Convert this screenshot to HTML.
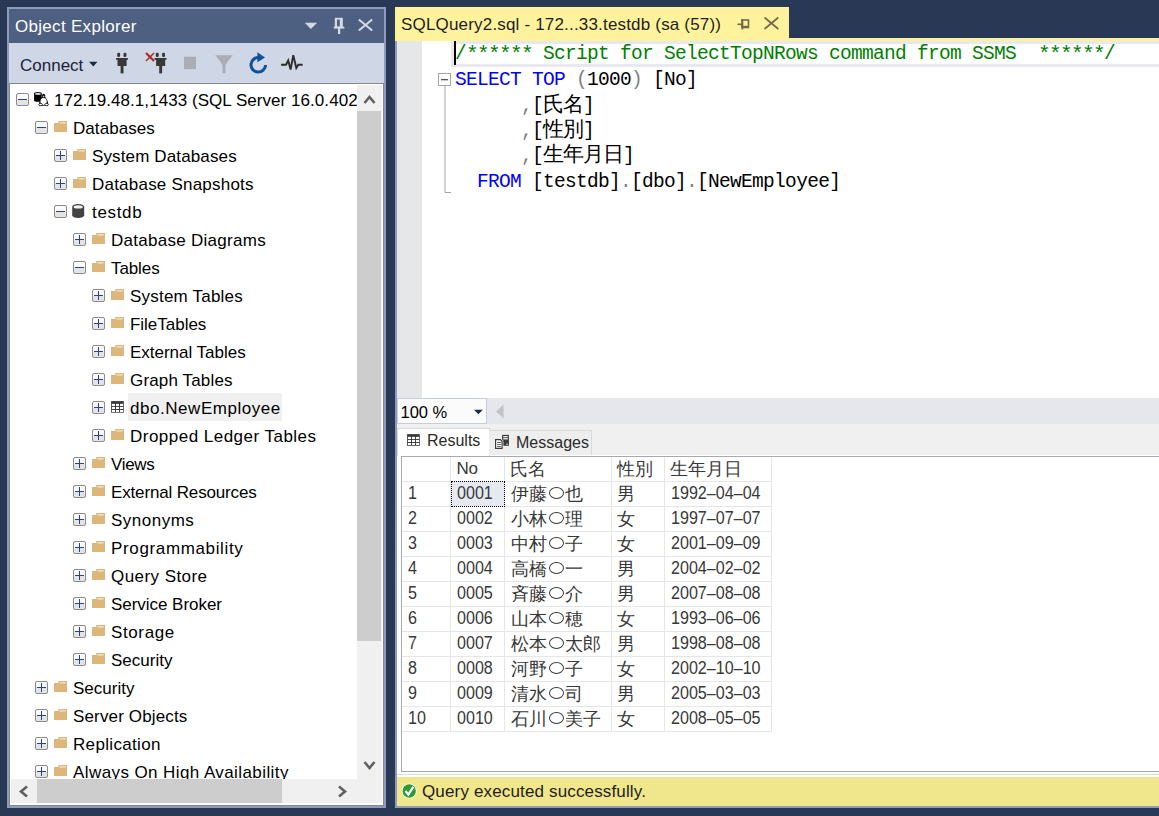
<!DOCTYPE html>
<html><head><meta charset="utf-8">
<style>
*{margin:0;padding:0;box-sizing:border-box}
html,body{width:1159px;height:816px;overflow:hidden;background:#293955;font-family:"Liberation Sans",sans-serif}
.a{position:absolute}
.t{position:absolute;white-space:nowrap;line-height:1}
svg{position:absolute;overflow:visible}
.gt{font-size:17px;color:#383838;letter-spacing:-0.4px}
.dg{font-size:17.5px;letter-spacing:0;transform:scaleX(0.92);transform-origin:0 0}
.tr{position:absolute;white-space:nowrap;line-height:1;font-size:17px;color:#000;letter-spacing:0.25px}
.bx{position:absolute;width:13px;height:13px;border:1px solid #8C8C8C;border-radius:2px;background:linear-gradient(#FAFAFA 0,#FAFAFA 50%,#E4E4E4 50%,#E4E4E4 100%)}
.bx:before{content:"";position:absolute;left:1px;top:5px;width:9px;height:1.4px;background:#2B4190}
.bx.p:after{content:"";position:absolute;left:4.8px;top:1px;width:1.4px;height:9px;background:#2B4190}
</style></head><body>

<div class="a" style="left:7px;top:7px;width:379px;height:801px;background:#8E9BBC"></div>
<div class="a" style="left:9px;top:9px;width:375px;height:34px;background:#4D6082"></div>
<div class="t" style="left:15px;top:18px;font-size:17px;color:#fff;letter-spacing:0.3px">Object Explorer</div>
<svg style="left:0;top:0" width="1" height="1"><path d="M304.7 22.8 L317.1 22.8 L310.9 29 Z" fill="#D5DAE5"/><rect x="334.8" y="17.8" width="8" height="9.5" fill="#D5DAE5"/><rect x="337" y="19.6" width="2.8" height="7" fill="#4D6082"/><rect x="333.8" y="26.6" width="10.5" height="2" fill="#D5DAE5"/><rect x="338" y="28" width="2.2" height="6" fill="#D5DAE5"/><path d="M358.8 19.5 L372.2 30.5 M372.2 19.5 L358.8 30.5" stroke="#D5DAE5" stroke-width="2"/></svg>
<div class="a" style="left:9px;top:43px;width:375px;height:40px;background:#CFD6E5"></div>
<div class="t" style="left:20px;top:57px;font-size:17px;color:#1E1E3C">Connect</div>
<svg style="left:0;top:0" width="1" height="1"><path d="M89 61.8 L97.5 61.8 L93.25 66.6 Z" fill="#1E2A44"/><g transform="translate(116,0)"><rect x="1.2" y="52.7" width="2.9" height="4.3" rx="1.2" fill="#383838"/><rect x="7.5" y="52.7" width="2.9" height="4.3" rx="1.2" fill="#383838"/><rect x="0" y="58" width="11.9" height="1.8" fill="#383838"/><rect x="1.5" y="58" width="9.1" height="8" fill="#383838"/><rect x="4.6" y="65" width="2.9" height="8.4" fill="#383838"/></g><g transform="translate(154.6,0)"><rect x="1.2" y="52.7" width="2.9" height="4.3" rx="1.2" fill="#383838"/><rect x="7.5" y="52.7" width="2.9" height="4.3" rx="1.2" fill="#383838"/><rect x="0" y="58" width="11.9" height="1.8" fill="#383838"/><rect x="1.5" y="58" width="9.1" height="8" fill="#383838"/><rect x="4.6" y="65" width="2.9" height="8.4" fill="#383838"/></g><path d="M146 53 L154 61" stroke="#A82A1A" stroke-width="2.2"/><path d="M154 53 L146 61" stroke="#A82A1A" stroke-width="1.5"/><rect x="184" y="56.7" width="12" height="12.5" fill="#A8ADB8"/><path d="M215.3 55.3 H232.7 L225.4 65 V73.2 H222.6 V65 Z" fill="#A8ADB8"/><path d="M259.5 57.6 A7.3 7.3 0 1 0 265.6 65" fill="none" stroke="#0F5299" stroke-width="3"/><path d="M257.4 52.3 L265 57.5 L257.4 62.3 Z" fill="#0F5299"/><path d="M281 64.8 H286 L288.2 60.5 L290.6 69.5 L293.3 55.2 L296.3 68 L298.3 64.8 H302.7" fill="none" stroke="#2D2D2D" stroke-width="1.9"/></svg>
<div class="a" style="left:9px;top:83px;width:375px;height:723px;background:#828790"></div>
<div class="a" style="left:10px;top:84px;width:373px;height:721px;background:#fff"></div>
<div class="a" style="left:10px;top:84px;width:347px;height:695px;overflow:hidden">
<div class="a" style="left:118px;top:309px;width:154px;height:28px;background:#F0F0F0"></div>
<div class="bx " style="left:6px;top:9px"></div>
<div class="tr" style="left:44px;top:8px;letter-spacing:0.05px">172.19.48.1,1433 (SQL Server 16.0.4022</div>
<div class="bx " style="left:25px;top:37px"></div>
<div class="tr" style="left:63px;top:36px;letter-spacing:0.062px">Databases</div>
<div class="bx p" style="left:44px;top:65px"></div>
<div class="tr" style="left:82px;top:64px;letter-spacing:0.133px">System Databases</div>
<div class="bx p" style="left:44px;top:93px"></div>
<div class="tr" style="left:82px;top:92px;letter-spacing:0.218px">Database Snapshots</div>
<div class="bx " style="left:44px;top:121px"></div>
<div class="tr" style="left:82px;top:120px;letter-spacing:0.68px">testdb</div>
<div class="bx p" style="left:63px;top:149px"></div>
<div class="tr" style="left:101px;top:148px;letter-spacing:0.275px">Database Diagrams</div>
<div class="bx " style="left:63px;top:177px"></div>
<div class="tr" style="left:101px;top:176px;letter-spacing:-0.1px">Tables</div>
<div class="bx p" style="left:82px;top:205px"></div>
<div class="tr" style="left:120px;top:204px;letter-spacing:0.208px">System Tables</div>
<div class="bx p" style="left:82px;top:233px"></div>
<div class="tr" style="left:120px;top:232px;letter-spacing:-0.022px">FileTables</div>
<div class="bx p" style="left:82px;top:261px"></div>
<div class="tr" style="left:120px;top:260px;letter-spacing:-0.021px">External Tables</div>
<div class="bx p" style="left:82px;top:289px"></div>
<div class="tr" style="left:120px;top:288px;letter-spacing:0.155px">Graph Tables</div>
<div class="bx p" style="left:82px;top:317px"></div>
<div class="tr" style="left:120px;top:316px;letter-spacing:0.543px">dbo.NewEmployee</div>
<div class="bx p" style="left:82px;top:345px"></div>
<div class="tr" style="left:120px;top:344px;letter-spacing:0.48px">Dropped Ledger Tables</div>
<div class="bx p" style="left:63px;top:373px"></div>
<div class="tr" style="left:101px;top:372px;letter-spacing:-0.325px">Views</div>
<div class="bx p" style="left:63px;top:401px"></div>
<div class="tr" style="left:101px;top:400px;letter-spacing:-0.153px">External Resources</div>
<div class="bx p" style="left:63px;top:429px"></div>
<div class="tr" style="left:101px;top:428px;letter-spacing:0.5px">Synonyms</div>
<div class="bx p" style="left:63px;top:457px"></div>
<div class="tr" style="left:101px;top:456px;letter-spacing:0.643px">Programmability</div>
<div class="bx p" style="left:63px;top:485px"></div>
<div class="tr" style="left:101px;top:484px;letter-spacing:0.44px">Query Store</div>
<div class="bx p" style="left:63px;top:513px"></div>
<div class="tr" style="left:101px;top:512px;letter-spacing:-0.038px">Service Broker</div>
<div class="bx p" style="left:63px;top:541px"></div>
<div class="tr" style="left:101px;top:540px;letter-spacing:0.617px">Storage</div>
<div class="bx p" style="left:63px;top:569px"></div>
<div class="tr" style="left:101px;top:568px;letter-spacing:0.014px">Security</div>
<div class="bx p" style="left:25px;top:597px"></div>
<div class="tr" style="left:63px;top:596px;letter-spacing:0.014px">Security</div>
<div class="bx p" style="left:25px;top:625px"></div>
<div class="tr" style="left:63px;top:624px;letter-spacing:0.146px">Server Objects</div>
<div class="bx p" style="left:25px;top:653px"></div>
<div class="tr" style="left:63px;top:652px;letter-spacing:0.33px">Replication</div>
<div class="bx p" style="left:25px;top:681px"></div>
<div class="tr" style="left:63px;top:680px;letter-spacing:0.412px">Always On High Availability</div>
<svg style="left:0;top:0" width="1" height="1"><g transform="translate(-10,-84)"><path d="M34.1 93.6 A3.85 1.5 0 0 1 41.8 93.6 V100.4 A3.85 1.3 0 0 1 34.1 100.4 Z" fill="#000"/><ellipse cx="37.95" cy="93.9" rx="3" ry="0.95" fill="#EDEDED"/><path d="M43.6 93.8 C42.3 93.8 41.9 95 42 97.2 C40.3 99 39 101.5 39 104 L40 105.8 H47.5 L48.2 104 C48.2 101.5 47 99 45.3 97.2 C45.4 95 45 93.8 43.6 93.8 Z" fill="#111"/><ellipse cx="43.6" cy="101.6" rx="3.1" ry="3.5" fill="#fff"/><ellipse cx="43.5" cy="96.6" rx="0.9" ry="0.8" fill="#ccc"/><ellipse cx="40.6" cy="104.6" rx="1.9" ry="1.1" fill="#fff" stroke="#111" stroke-width="0.8"/><ellipse cx="46.6" cy="104.6" rx="1.9" ry="1.1" fill="#fff" stroke="#111" stroke-width="0.8"/></g><g transform="translate(44,37)"><path d="M0 2 H4.3 V0 H13 V11 H0 Z" fill="#DCB67A"/><rect x="5.5" y="1.2" width="6.2" height="1.3" fill="#F3E6CC"/></g><g transform="translate(63,65)"><path d="M0 2 H4.3 V0 H13 V11 H0 Z" fill="#DCB67A"/><rect x="5.5" y="1.2" width="6.2" height="1.3" fill="#F3E6CC"/></g><g transform="translate(63,93)"><path d="M0 2 H4.3 V0 H13 V11 H0 Z" fill="#DCB67A"/><rect x="5.5" y="1.2" width="6.2" height="1.3" fill="#F3E6CC"/></g><g transform="translate(62.2,120)"><path d="M0 2.8 A6 2.8 0 0 1 12 2.8 V11.2 A6 2.8 0 0 1 0 11.2 Z" fill="#424242"/><ellipse cx="6" cy="2.9" rx="4.6" ry="1.6" fill="#F4F4F4"/></g><g transform="translate(82,149)"><path d="M0 2 H4.3 V0 H13 V11 H0 Z" fill="#DCB67A"/><rect x="5.5" y="1.2" width="6.2" height="1.3" fill="#F3E6CC"/></g><g transform="translate(82,177)"><path d="M0 2 H4.3 V0 H13 V11 H0 Z" fill="#DCB67A"/><rect x="5.5" y="1.2" width="6.2" height="1.3" fill="#F3E6CC"/></g><g transform="translate(101,205)"><path d="M0 2 H4.3 V0 H13 V11 H0 Z" fill="#DCB67A"/><rect x="5.5" y="1.2" width="6.2" height="1.3" fill="#F3E6CC"/></g><g transform="translate(101,233)"><path d="M0 2 H4.3 V0 H13 V11 H0 Z" fill="#DCB67A"/><rect x="5.5" y="1.2" width="6.2" height="1.3" fill="#F3E6CC"/></g><g transform="translate(101,261)"><path d="M0 2 H4.3 V0 H13 V11 H0 Z" fill="#DCB67A"/><rect x="5.5" y="1.2" width="6.2" height="1.3" fill="#F3E6CC"/></g><g transform="translate(101,289)"><path d="M0 2 H4.3 V0 H13 V11 H0 Z" fill="#DCB67A"/><rect x="5.5" y="1.2" width="6.2" height="1.3" fill="#F3E6CC"/></g><g transform="translate(-10,-84) translate(111.1,401.1)"><rect x="0" y="0" width="12.7" height="11.6" fill="#383838"/><rect x="0.80" y="2.75" width="3.1" height="2.1" fill="#fff"/><rect x="0.80" y="5.80" width="3.1" height="2.1" fill="#fff"/><rect x="0.80" y="8.85" width="3.1" height="2.1" fill="#fff"/><rect x="4.85" y="2.75" width="3.1" height="2.1" fill="#fff"/><rect x="4.85" y="5.80" width="3.1" height="2.1" fill="#fff"/><rect x="4.85" y="8.85" width="3.1" height="2.1" fill="#fff"/><rect x="8.90" y="2.75" width="3.1" height="2.1" fill="#fff"/><rect x="8.90" y="5.80" width="3.1" height="2.1" fill="#fff"/><rect x="8.90" y="8.85" width="3.1" height="2.1" fill="#fff"/></g><g transform="translate(101,345)"><path d="M0 2 H4.3 V0 H13 V11 H0 Z" fill="#DCB67A"/><rect x="5.5" y="1.2" width="6.2" height="1.3" fill="#F3E6CC"/></g><g transform="translate(82,373)"><path d="M0 2 H4.3 V0 H13 V11 H0 Z" fill="#DCB67A"/><rect x="5.5" y="1.2" width="6.2" height="1.3" fill="#F3E6CC"/></g><g transform="translate(82,401)"><path d="M0 2 H4.3 V0 H13 V11 H0 Z" fill="#DCB67A"/><rect x="5.5" y="1.2" width="6.2" height="1.3" fill="#F3E6CC"/></g><g transform="translate(82,429)"><path d="M0 2 H4.3 V0 H13 V11 H0 Z" fill="#DCB67A"/><rect x="5.5" y="1.2" width="6.2" height="1.3" fill="#F3E6CC"/></g><g transform="translate(82,457)"><path d="M0 2 H4.3 V0 H13 V11 H0 Z" fill="#DCB67A"/><rect x="5.5" y="1.2" width="6.2" height="1.3" fill="#F3E6CC"/></g><g transform="translate(82,485)"><path d="M0 2 H4.3 V0 H13 V11 H0 Z" fill="#DCB67A"/><rect x="5.5" y="1.2" width="6.2" height="1.3" fill="#F3E6CC"/></g><g transform="translate(82,513)"><path d="M0 2 H4.3 V0 H13 V11 H0 Z" fill="#DCB67A"/><rect x="5.5" y="1.2" width="6.2" height="1.3" fill="#F3E6CC"/></g><g transform="translate(82,541)"><path d="M0 2 H4.3 V0 H13 V11 H0 Z" fill="#DCB67A"/><rect x="5.5" y="1.2" width="6.2" height="1.3" fill="#F3E6CC"/></g><g transform="translate(82,569)"><path d="M0 2 H4.3 V0 H13 V11 H0 Z" fill="#DCB67A"/><rect x="5.5" y="1.2" width="6.2" height="1.3" fill="#F3E6CC"/></g><g transform="translate(44,597)"><path d="M0 2 H4.3 V0 H13 V11 H0 Z" fill="#DCB67A"/><rect x="5.5" y="1.2" width="6.2" height="1.3" fill="#F3E6CC"/></g><g transform="translate(44,625)"><path d="M0 2 H4.3 V0 H13 V11 H0 Z" fill="#DCB67A"/><rect x="5.5" y="1.2" width="6.2" height="1.3" fill="#F3E6CC"/></g><g transform="translate(44,653)"><path d="M0 2 H4.3 V0 H13 V11 H0 Z" fill="#DCB67A"/><rect x="5.5" y="1.2" width="6.2" height="1.3" fill="#F3E6CC"/></g><g transform="translate(44,681)"><path d="M0 2 H4.3 V0 H13 V11 H0 Z" fill="#DCB67A"/><rect x="5.5" y="1.2" width="6.2" height="1.3" fill="#F3E6CC"/></g></svg>
</div>
<div class="a" style="left:357px;top:85px;width:25px;height:718px;background:#F0F0F0"></div>
<div class="a" style="left:357px;top:111px;width:24px;height:530px;background:#CDCDCD"></div>
<div class="a" style="left:11px;top:779px;width:346px;height:24px;background:#F0F0F0"></div>
<div class="a" style="left:37px;top:779px;width:245px;height:24px;background:#CDCDCD"></div>
<svg style="left:0;top:0" width="1" height="1" ><path d="M364.5 103 L369.5 97 L374.5 103" fill="none" stroke="#606060" stroke-width="2.6"/><path d="M364.5 762 L369.5 768 L374.5 762" fill="none" stroke="#606060" stroke-width="2.6"/><path d="M27 786.5 L21 791.5 L27 796.5" fill="none" stroke="#606060" stroke-width="2.6"/><path d="M339 786.5 L345 791.5 L339 796.5" fill="none" stroke="#606060" stroke-width="2.6"/></svg>
<div class="a" style="left:395px;top:7px;width:394px;height:31px;background:#FFF29D"></div>
<div class="t" style="left:401px;top:16px;font-size:17px;color:#1E1E1E;letter-spacing:0.18px">SQLQuery2.sql - 172...33.testdb (sa (57))</div>
<div class="a" style="left:395px;top:38px;width:764px;height:3px;background:#FFF29D"></div>
<svg style="left:0;top:0" width="1" height="1"><path d="M737.5 24.3 H742" stroke="#75694A" stroke-width="1.6"/><rect x="742" y="20" width="6.5" height="7.5" fill="none" stroke="#75694A" stroke-width="1.6"/><rect x="741.5" y="19" width="1.8" height="10.5" fill="#75694A"/><rect x="743" y="25.8" width="5.5" height="1.8" fill="#75694A"/><path d="M764.5 17.5 L778.3 29 M778.3 17.5 L764.5 29" stroke="#75694A" stroke-width="1.7"/></svg>
<div class="a" style="left:395px;top:41px;width:764px;height:767px;background:#8E9BBC"></div>
<div class="a" style="left:397px;top:41px;width:762px;height:357px;background:#fff"></div>
<div class="a" style="left:397px;top:41px;width:25px;height:357px;background:#E6E7E8"></div>
<div class="a" style="left:397px;top:398px;width:762px;height:26px;background:#E6E7ED"></div>
<div class="a" style="left:397px;top:398px;width:90px;height:26px;background:#FBFBFB;border:1px solid #C6CCDA"></div>
<div class="t" style="left:400.5px;top:404px;font-size:16.5px;color:#000">100 %</div>
<div class="a" style="left:397px;top:424px;width:762px;height:31px;background:#F0F0F0"></div>
<div class="a" style="left:397px;top:455px;width:762px;height:322px;background:#fff"></div>
<div class="a" style="left:401px;top:456px;width:758px;height:316px;border:1px solid #A6A9B3;border-right:none"></div>
<div class="a" style="left:451px;top:41px;width:708px;height:25.5px;border:3px solid #E8E8F0;border-right:none"></div>
<div class="a" style="left:453.8px;top:41px;width:2.1px;height:23.5px;background:#000"></div>
<svg style="left:0;top:0" width="1" height="1"><rect x="438.5" y="73.5" width="12" height="12" fill="#fff" stroke="#A5A5A5" stroke-width="1"/><rect x="441" y="79" width="7" height="1.3" fill="#555"/><path d="M445 86 V192.5 H451" fill="none" stroke="#A5A5A5" stroke-width="1"/></svg>
<div class="t" style="left:455px;top:44.70px;font-family:'Liberation Mono',monospace;font-size:19.5px;letter-spacing:-0.7px;white-space:pre"><span style="color:#008000">/<span style="display:inline-block;width:11px;font-size:21px;line-height:0;position:relative;top:1px;letter-spacing:0;text-align:center">*</span><span style="display:inline-block;width:11px;font-size:21px;line-height:0;position:relative;top:1px;letter-spacing:0;text-align:center">*</span><span style="display:inline-block;width:11px;font-size:21px;line-height:0;position:relative;top:1px;letter-spacing:0;text-align:center">*</span><span style="display:inline-block;width:11px;font-size:21px;line-height:0;position:relative;top:1px;letter-spacing:0;text-align:center">*</span><span style="display:inline-block;width:11px;font-size:21px;line-height:0;position:relative;top:1px;letter-spacing:0;text-align:center">*</span><span style="display:inline-block;width:11px;font-size:21px;line-height:0;position:relative;top:1px;letter-spacing:0;text-align:center">*</span> Script for SelectTopNRows command from SSMS  <span style="display:inline-block;width:11px;font-size:21px;line-height:0;position:relative;top:1px;letter-spacing:0;text-align:center">*</span><span style="display:inline-block;width:11px;font-size:21px;line-height:0;position:relative;top:1px;letter-spacing:0;text-align:center">*</span><span style="display:inline-block;width:11px;font-size:21px;line-height:0;position:relative;top:1px;letter-spacing:0;text-align:center">*</span><span style="display:inline-block;width:11px;font-size:21px;line-height:0;position:relative;top:1px;letter-spacing:0;text-align:center">*</span><span style="display:inline-block;width:11px;font-size:21px;line-height:0;position:relative;top:1px;letter-spacing:0;text-align:center">*</span><span style="display:inline-block;width:11px;font-size:21px;line-height:0;position:relative;top:1px;letter-spacing:0;text-align:center">*</span>/</span></div>
<div class="t" style="left:455px;top:71.27px;font-family:'Liberation Mono',monospace;font-size:19.5px;letter-spacing:-0.7px;white-space:pre"><span style="color:#0000FF">SELECT TOP </span><span style="color:#808080">(</span><span style="color:#000">1000</span><span style="color:#808080">)</span><span style="color:#000"> [No]</span></div>
<div class="t" style="left:455px;top:96.65px;font-family:'Liberation Mono',monospace;font-size:19.5px;letter-spacing:-0.7px;white-space:pre"><span style="color:#000">      </span><span style="color:#808080">,</span><span style="color:#000">[</span><span style="color:#000"><span style="display:inline-block;width:20px;font-size:20.5px;line-height:0;text-align:center">氏</span><span style="display:inline-block;width:20px;font-size:20.5px;line-height:0;text-align:center">名</span></span><span style="color:#000">]</span></div>
<div class="t" style="left:455px;top:122.02px;font-family:'Liberation Mono',monospace;font-size:19.5px;letter-spacing:-0.7px;white-space:pre"><span style="color:#000">      </span><span style="color:#808080">,</span><span style="color:#000">[</span><span style="color:#000"><span style="display:inline-block;width:20px;font-size:20.5px;line-height:0;text-align:center">性</span><span style="display:inline-block;width:20px;font-size:20.5px;line-height:0;text-align:center">別</span></span><span style="color:#000">]</span></div>
<div class="t" style="left:455px;top:147.40px;font-family:'Liberation Mono',monospace;font-size:19.5px;letter-spacing:-0.7px;white-space:pre"><span style="color:#000">      </span><span style="color:#808080">,</span><span style="color:#000">[</span><span style="color:#000"><span style="display:inline-block;width:20px;font-size:20.5px;line-height:0;text-align:center">生</span><span style="display:inline-block;width:20px;font-size:20.5px;line-height:0;text-align:center">年</span><span style="display:inline-block;width:20px;font-size:20.5px;line-height:0;text-align:center">月</span><span style="display:inline-block;width:20px;font-size:20.5px;line-height:0;text-align:center">日</span></span><span style="color:#000">]</span></div>
<div class="t" style="left:455px;top:172.78px;font-family:'Liberation Mono',monospace;font-size:19.5px;letter-spacing:-0.7px;white-space:pre"><span style="color:#000">  </span><span style="color:#0000FF">FROM</span><span style="color:#000"> [testdb]</span><span style="color:#808080">.</span><span style="color:#000">[dbo]</span><span style="color:#808080">.</span><span style="color:#000">[NewEmployee]</span></div>
<div class="a" style="left:397px;top:428px;width:93px;height:28px;background:#fff;border:1px solid #DADADA;border-bottom:none"></div>
<div class="a" style="left:489px;top:430px;width:103px;height:25px;background:#EEEEEE;border:1px solid #DADADA;border-bottom:none;border-left:none"></div>
<svg style="left:0;top:0" width="1" height="1"><g transform="translate(407.1,434.1)"><rect width="12.7" height="11.7" fill="#383838"/><rect x="0.80" y="2.75" width="3.1" height="2.1" fill="#fff"/><rect x="0.80" y="5.80" width="3.1" height="2.1" fill="#fff"/><rect x="0.80" y="8.85" width="3.1" height="2.1" fill="#fff"/><rect x="4.85" y="2.75" width="3.1" height="2.1" fill="#fff"/><rect x="4.85" y="5.80" width="3.1" height="2.1" fill="#fff"/><rect x="4.85" y="8.85" width="3.1" height="2.1" fill="#fff"/><rect x="8.90" y="2.75" width="3.1" height="2.1" fill="#fff"/><rect x="8.90" y="5.80" width="3.1" height="2.1" fill="#fff"/><rect x="8.90" y="8.85" width="3.1" height="2.1" fill="#fff"/></g><rect x="502.1" y="434.9" width="6.8" height="10.9" fill="#383838"/><rect x="503.2" y="436.1" width="4.6" height="1.2" fill="#fff"/><rect x="503.2" y="438.2" width="4.6" height="1.2" fill="#fff"/><circle cx="507" cy="444.2" r="0.7" fill="#fff"/><path d="M495.6 439.6 H500.4 L502.1 441.3 V448.4 H495.6 Z" fill="#fff" stroke="#EEEEEE" stroke-width="2.6"/><path d="M495.6 439.6 H500.4 L502.1 441.3 V448.4 H495.6 Z" fill="#fff" stroke="#383838" stroke-width="1.15"/><rect x="497.1" y="442" width="3.7" height="0.8" fill="#383838"/><rect x="497.1" y="444.1" width="3.7" height="0.8" fill="#383838"/><rect x="497.1" y="446.1" width="3.7" height="0.8" fill="#383838"/></svg>
<div class="t" style="left:427px;top:432.5px;font-size:16px;color:#2A2A2A">Results</div>
<div class="t" style="left:516px;top:434.5px;font-size:16px;color:#2A2A2A">Messages</div>
<svg style="left:0;top:0" width="1" height="1"><path d="M474 409.7 H482.8 L478.4 414.2 Z" fill="#1E2A44"/><path d="M503.6 404.8 V418.4 L496 411.6 Z" fill="#C2C3C9"/></svg>
<div class="a" style="left:450px;top:457px;width:1px;height:274px;background:#E6E6E6"></div><div class="a" style="left:504px;top:457px;width:1px;height:274px;background:#E6E6E6"></div><div class="a" style="left:611px;top:457px;width:1px;height:274px;background:#E6E6E6"></div><div class="a" style="left:664px;top:457px;width:1px;height:274px;background:#E6E6E6"></div><div class="a" style="left:771px;top:457px;width:1px;height:274px;background:#E6E6E6"></div><div class="a" style="left:402px;top:481px;width:370px;height:1px;background:#E6E6E6"></div><div class="a" style="left:402px;top:506px;width:370px;height:1px;background:#E6E6E6"></div><div class="a" style="left:402px;top:531px;width:370px;height:1px;background:#E6E6E6"></div><div class="a" style="left:402px;top:556px;width:370px;height:1px;background:#E6E6E6"></div><div class="a" style="left:402px;top:581px;width:370px;height:1px;background:#E6E6E6"></div><div class="a" style="left:402px;top:606px;width:370px;height:1px;background:#E6E6E6"></div><div class="a" style="left:402px;top:631px;width:370px;height:1px;background:#E6E6E6"></div><div class="a" style="left:402px;top:656px;width:370px;height:1px;background:#E6E6E6"></div><div class="a" style="left:402px;top:681px;width:370px;height:1px;background:#E6E6E6"></div><div class="a" style="left:402px;top:706px;width:370px;height:1px;background:#E6E6E6"></div><div class="a" style="left:402px;top:731px;width:370px;height:1px;background:#E6E6E6"></div>
<div class="a" style="left:451px;top:481px;width:54px;height:26px;background:#E6EAF0;border:1px dotted #000"></div>
<div class="t gt" style="left:456.5px;top:459.6px">No</div><div class="t gt" style="left:510px;top:459.6px"><span style="display:inline-block;width:18px;font-size:18px">氏</span><span style="display:inline-block;width:18px;font-size:18px">名</span></div><div class="t gt" style="left:616.5px;top:459.6px"><span style="display:inline-block;width:18px;font-size:18px">性</span><span style="display:inline-block;width:18px;font-size:18px">別</span></div><div class="t gt" style="left:670px;top:459.6px"><span style="display:inline-block;width:18px;font-size:18px">生</span><span style="display:inline-block;width:18px;font-size:18px">年</span><span style="display:inline-block;width:18px;font-size:18px">月</span><span style="display:inline-block;width:18px;font-size:18px">日</span></div><div class="t gt dg" style="left:407.5px;top:485.20000000000005px">1</div><div class="t gt dg" style="left:457px;top:485.20000000000005px">0001</div><div class="t gt" style="left:511px;top:484.6px"><span style="display:inline-block;width:18px;font-size:18px">伊</span><span style="display:inline-block;width:18px;font-size:18px">藤</span><span style="display:inline-block;width:18px;height:12px;vertical-align:0;position:relative"><span style="position:absolute;left:1.5px;top:-0.5px;width:15px;height:12px;border:1.1px solid #383838;border-radius:50%"></span></span><span style="display:inline-block;width:18px;font-size:18px">也</span></div><div class="t gt" style="left:617px;top:484.6px"><span style="display:inline-block;width:18px;font-size:18px">男</span></div><div class="t gt dg" style="left:671px;top:485.20000000000005px">1992–04–04</div><div class="t gt dg" style="left:407.5px;top:510.20000000000005px">2</div><div class="t gt dg" style="left:457px;top:510.20000000000005px">0002</div><div class="t gt" style="left:511px;top:509.6px"><span style="display:inline-block;width:18px;font-size:18px">小</span><span style="display:inline-block;width:18px;font-size:18px">林</span><span style="display:inline-block;width:18px;height:12px;vertical-align:0;position:relative"><span style="position:absolute;left:1.5px;top:-0.5px;width:15px;height:12px;border:1.1px solid #383838;border-radius:50%"></span></span><span style="display:inline-block;width:18px;font-size:18px">理</span></div><div class="t gt" style="left:617px;top:509.6px"><span style="display:inline-block;width:18px;font-size:18px">女</span></div><div class="t gt dg" style="left:671px;top:510.20000000000005px">1997–07–07</div><div class="t gt dg" style="left:407.5px;top:535.2px">3</div><div class="t gt dg" style="left:457px;top:535.2px">0003</div><div class="t gt" style="left:511px;top:534.6px"><span style="display:inline-block;width:18px;font-size:18px">中</span><span style="display:inline-block;width:18px;font-size:18px">村</span><span style="display:inline-block;width:18px;height:12px;vertical-align:0;position:relative"><span style="position:absolute;left:1.5px;top:-0.5px;width:15px;height:12px;border:1.1px solid #383838;border-radius:50%"></span></span><span style="display:inline-block;width:18px;font-size:18px">子</span></div><div class="t gt" style="left:617px;top:534.6px"><span style="display:inline-block;width:18px;font-size:18px">女</span></div><div class="t gt dg" style="left:671px;top:535.2px">2001–09–09</div><div class="t gt dg" style="left:407.5px;top:560.2px">4</div><div class="t gt dg" style="left:457px;top:560.2px">0004</div><div class="t gt" style="left:511px;top:559.6px"><span style="display:inline-block;width:18px;font-size:18px">高</span><span style="display:inline-block;width:18px;font-size:18px">橋</span><span style="display:inline-block;width:18px;height:12px;vertical-align:0;position:relative"><span style="position:absolute;left:1.5px;top:-0.5px;width:15px;height:12px;border:1.1px solid #383838;border-radius:50%"></span></span><span style="display:inline-block;width:18px;font-size:18px">一</span></div><div class="t gt" style="left:617px;top:559.6px"><span style="display:inline-block;width:18px;font-size:18px">男</span></div><div class="t gt dg" style="left:671px;top:560.2px">2004–02–02</div><div class="t gt dg" style="left:407.5px;top:585.2px">5</div><div class="t gt dg" style="left:457px;top:585.2px">0005</div><div class="t gt" style="left:511px;top:584.6px"><span style="display:inline-block;width:18px;font-size:18px">斉</span><span style="display:inline-block;width:18px;font-size:18px">藤</span><span style="display:inline-block;width:18px;height:12px;vertical-align:0;position:relative"><span style="position:absolute;left:1.5px;top:-0.5px;width:15px;height:12px;border:1.1px solid #383838;border-radius:50%"></span></span><span style="display:inline-block;width:18px;font-size:18px">介</span></div><div class="t gt" style="left:617px;top:584.6px"><span style="display:inline-block;width:18px;font-size:18px">男</span></div><div class="t gt dg" style="left:671px;top:585.2px">2007–08–08</div><div class="t gt dg" style="left:407.5px;top:610.2px">6</div><div class="t gt dg" style="left:457px;top:610.2px">0006</div><div class="t gt" style="left:511px;top:609.6px"><span style="display:inline-block;width:18px;font-size:18px">山</span><span style="display:inline-block;width:18px;font-size:18px">本</span><span style="display:inline-block;width:18px;height:12px;vertical-align:0;position:relative"><span style="position:absolute;left:1.5px;top:-0.5px;width:15px;height:12px;border:1.1px solid #383838;border-radius:50%"></span></span><span style="display:inline-block;width:18px;font-size:18px">穂</span></div><div class="t gt" style="left:617px;top:609.6px"><span style="display:inline-block;width:18px;font-size:18px">女</span></div><div class="t gt dg" style="left:671px;top:610.2px">1993–06–06</div><div class="t gt dg" style="left:407.5px;top:635.2px">7</div><div class="t gt dg" style="left:457px;top:635.2px">0007</div><div class="t gt" style="left:511px;top:634.6px"><span style="display:inline-block;width:18px;font-size:18px">松</span><span style="display:inline-block;width:18px;font-size:18px">本</span><span style="display:inline-block;width:18px;height:12px;vertical-align:0;position:relative"><span style="position:absolute;left:1.5px;top:-0.5px;width:15px;height:12px;border:1.1px solid #383838;border-radius:50%"></span></span><span style="display:inline-block;width:18px;font-size:18px">太</span><span style="display:inline-block;width:18px;font-size:18px">郎</span></div><div class="t gt" style="left:617px;top:634.6px"><span style="display:inline-block;width:18px;font-size:18px">男</span></div><div class="t gt dg" style="left:671px;top:635.2px">1998–08–08</div><div class="t gt dg" style="left:407.5px;top:660.2px">8</div><div class="t gt dg" style="left:457px;top:660.2px">0008</div><div class="t gt" style="left:511px;top:659.6px"><span style="display:inline-block;width:18px;font-size:18px">河</span><span style="display:inline-block;width:18px;font-size:18px">野</span><span style="display:inline-block;width:18px;height:12px;vertical-align:0;position:relative"><span style="position:absolute;left:1.5px;top:-0.5px;width:15px;height:12px;border:1.1px solid #383838;border-radius:50%"></span></span><span style="display:inline-block;width:18px;font-size:18px">子</span></div><div class="t gt" style="left:617px;top:659.6px"><span style="display:inline-block;width:18px;font-size:18px">女</span></div><div class="t gt dg" style="left:671px;top:660.2px">2002–10–10</div><div class="t gt dg" style="left:407.5px;top:685.2px">9</div><div class="t gt dg" style="left:457px;top:685.2px">0009</div><div class="t gt" style="left:511px;top:684.6px"><span style="display:inline-block;width:18px;font-size:18px">清</span><span style="display:inline-block;width:18px;font-size:18px">水</span><span style="display:inline-block;width:18px;height:12px;vertical-align:0;position:relative"><span style="position:absolute;left:1.5px;top:-0.5px;width:15px;height:12px;border:1.1px solid #383838;border-radius:50%"></span></span><span style="display:inline-block;width:18px;font-size:18px">司</span></div><div class="t gt" style="left:617px;top:684.6px"><span style="display:inline-block;width:18px;font-size:18px">男</span></div><div class="t gt dg" style="left:671px;top:685.2px">2005–03–03</div><div class="t gt dg" style="left:407.5px;top:710.2px">10</div><div class="t gt dg" style="left:457px;top:710.2px">0010</div><div class="t gt" style="left:511px;top:709.6px"><span style="display:inline-block;width:18px;font-size:18px">石</span><span style="display:inline-block;width:18px;font-size:18px">川</span><span style="display:inline-block;width:18px;height:12px;vertical-align:0;position:relative"><span style="position:absolute;left:1.5px;top:-0.5px;width:15px;height:12px;border:1.1px solid #383838;border-radius:50%"></span></span><span style="display:inline-block;width:18px;font-size:18px">美</span><span style="display:inline-block;width:18px;font-size:18px">子</span></div><div class="t gt" style="left:617px;top:709.6px"><span style="display:inline-block;width:18px;font-size:18px">女</span></div><div class="t gt dg" style="left:671px;top:710.2px">2008–05–05</div>
<div class="a" style="left:397px;top:774px;width:762px;height:1px;background:#DADADA"></div>
<div class="a" style="left:397px;top:777px;width:762px;height:29px;background:#F0E68C"></div>
<svg style="left:0;top:0" width="1" height="1"><circle cx="409.2" cy="791" r="7.6" fill="#fff"/><circle cx="409.2" cy="791" r="6.7" fill="#2E9A31"/><path d="M405.5 791 L408.3 794.5 L413.3 786.8" fill="none" stroke="#fff" stroke-width="2.2"/></svg>
<div class="t" style="left:422px;top:783px;font-size:17px;color:#1E1E1E;letter-spacing:0.15px">Query executed successfully.</div>
</body></html>
